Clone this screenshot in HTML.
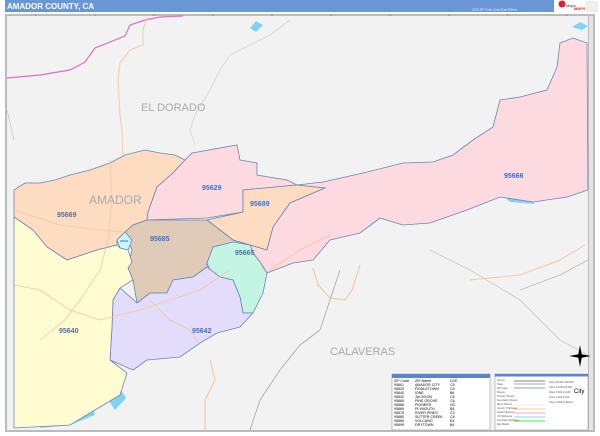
<!DOCTYPE html>
<html><head><meta charset="utf-8"><style>
html,body{margin:0;padding:0;background:#fff;}
body{width:600px;height:436px;overflow:hidden;position:relative;font-family:"Liberation Sans",sans-serif;}
</style></head><body>
<svg width="600" height="436" viewBox="0 0 600 436" xmlns="http://www.w3.org/2000/svg" style="position:absolute;left:0;top:0">
<rect x="0" y="0" width="600" height="436" fill="#fff"/>
<rect x="5" y="0" width="549" height="12" fill="#6a96d6"/>
<text x="7" y="9" font-size="8" font-weight="bold" fill="#fff" font-family="Liberation Sans">AMADOR COUNTY, CA</text>
<text x="472" y="10.5" font-size="3" fill="#fff" font-family="Liberation Sans">2020 ZIP Code Color/Cast Edition</text>
<circle cx="562" cy="4" r="3.5" fill="#d23"/>
<text x="566" y="7" font-size="4" fill="#345" font-family="Liberation Sans">Maps</text>
<text x="574" y="10" font-size="4" fill="#d22" font-weight="bold" font-family="Liberation Sans">MAPS</text>
<rect x="585" y="1" width="13" height="11" fill="#eee"/>
<rect x="5" y="14" width="590" height="418" fill="#bbb"/>
<rect x="7" y="16" width="581" height="414" fill="#f2f2f2"/>
<rect x="589" y="16" width="4" height="414" fill="#e4e4e4"/>
<g stroke="#888" stroke-width="1">
<line x1="36" y1="14" x2="36" y2="16"/><line x1="95" y1="14" x2="95" y2="16"/><line x1="154" y1="14" x2="154" y2="16"/><line x1="213" y1="14" x2="213" y2="16"/><line x1="272" y1="14" x2="272" y2="16"/><line x1="331" y1="14" x2="331" y2="16"/><line x1="390" y1="14" x2="390" y2="16"/><line x1="449" y1="14" x2="449" y2="16"/><line x1="508" y1="14" x2="508" y2="16"/><line x1="567" y1="14" x2="567" y2="16"/>
</g>
<g fill="none" stroke-width="0.9">
<path d="M7,78 L40,75 L70,70 L85,62 L95,48 L125,36 L130,25 L145,20 L160,17 L183,16" stroke="#e46cc4" stroke-width="1.2"/>
<path d="M147,17 L143,30 L143,45 L130,50 L120,63 L118,80 L120,115 L122,130 L123,155" stroke="#f2d2b0" stroke-width="1.2"/>
<path d="M290,20 L270,35 L250,45 L230,55 L220,70 L210,90 L195,115 L190,130 L195,145" stroke="#d8d8d8"/>
<path d="M7,110 L14,140" stroke="#ccc"/>
<path d="M313,268 L318,285 L330,298 L345,300 L352,290 L360,265" stroke="#efcba5" stroke-width="1.2"/>
<path d="M470,280 L520,275 L560,260 L585,245" stroke="#efcba5" stroke-width="1"/>
<path d="M210,360 L215,380 L205,400 L205,430" stroke="#efcba5" stroke-width="1.2"/>
<path d="M340,270 L330,300 L320,330 L300,345 L280,370 L260,400 L250,430" stroke="#aaa"/>
<path d="M520,290 L560,275 L588,260" stroke="#bbb"/>
<path d="M430,250 L470,270 L520,300 L560,340 L588,355" stroke="#ccc"/>
</g>
<g fill="#7fd4f4">
<path d="M250,28 L256,21 L263,25 L256,32 Z"/>
<path d="M572,27 L580,22 L588,26 L582,30 Z"/>
<path d="M476,166 L490,155 L502,150 L500,158 L486,166 Z"/>
<path d="M558,65 L564,50 L570,55 L565,70 Z"/>
<path d="M505,197 L530,200 L535,204 L510,202 Z"/>
<path d="M40,410 L60,400 L75,408 L90,395 L95,415 L70,425 L40,428 Z"/>
<path d="M105,395 L118,385 L126,398 L115,410 Z"/>
</g>
<g stroke="#6b84b8" stroke-width="0.8">
<path fill="#fddcc2" d="M14,190 L25,183 L40,183 L55,180 L70,175 L90,170 L110,163 L125,155 L145,150 L160,153 L175,155 L185,160 L173,173 L157,187 L148,212 L147,220 L133,225 L125,232 L117,240 L117,245 L97,250 L67,260 L47,247 L33,230 L14,217 Z"/>
<path fill="#fdd9e0" d="M185,160 L192,153 L237,145 L240,160 L257,163 L257,175 L287,180 L297,185 L243,190 L243,212 L207,218 L147,220 L148,212 L157,187 L173,173 Z"/>
<path fill="#fddcc2" d="M243,190 L297,185 L325,188 L290,203 L273,227 L267,250 L250,245 L233,240 L207,220 L243,212 Z"/>
<path fill="#fdd9e0" d="M297,185 L323,182 L363,173 L403,163 L433,162 L453,155 L473,140 L493,127 L500,100 L520,97 L547,90 L557,67 L560,43 L573,38 L587,43 L588,190 L567,197 L533,202 L500,197 L467,210 L430,223 L403,225 L380,218 L360,233 L330,240 L313,260 L293,263 L267,273 L260,262 L253,253 L250,245 L267,250 L273,227 L290,203 L325,188 Z"/>
<path fill="#dfcbb8" d="M133,225 L147,220 L207,220 L233,240 L250,245 L233,242 L213,247 L207,263 L207,267 L193,277 L173,280 L167,293 L150,293 L137,303 L133,280 L128,268 L132,250 L125,232 Z"/>
<path fill="#c6f6ff" d="M117,240 L125,232 L132,240 L128,250 L120,248 Z"/>
<path fill="#c4f5e2" d="M213,247 L233,242 L250,245 L253,253 L260,262 L267,273 L263,293 L253,313 L243,313 L240,297 L233,280 L220,277 L210,270 L207,263 Z"/>
<path fill="#e3dcfb" d="M120,288 L137,303 L150,293 L167,293 L173,280 L193,277 L207,267 L220,277 L233,280 L240,297 L243,313 L253,313 L240,327 L217,333 L200,343 L180,357 L147,360 L133,370 L110,360 L112,327 L113,300 Z"/>
<path fill="#fffcd2" d="M14,217 L33,230 L47,247 L67,260 L97,250 L117,245 L120,248 L128,250 L132,262 L128,268 L133,280 L120,288 L113,300 L112,327 L110,360 L127,373 L120,395 L95,410 L70,425 L14,428 Z"/>
</g>
<g fill="none" stroke="#f2c79c" stroke-width="0.8">
<path d="M14,210 L60,225 L100,230 L125,232"/>
<path d="M110,160 L112,200 L108,240 L100,270 L80,300 L65,320 L40,340"/>
<path d="M14,285 L40,290 L70,310 L100,320 L140,310 L170,300 L200,290 L230,270"/>
<path d="M150,300 L170,320 L190,330 L200,345"/>
<path d="M270,270 L300,250 L330,235"/>
</g>
<g font-family="Liberation Sans" fill="#aaa" font-size="11">
<text x="141" y="111">EL DORADO</text>
<text x="89" y="204" font-size="12">AMADOR</text>
<text x="330" y="355">CALAVERAS</text>
</g>
<g font-family="Liberation Sans" fill="#4a6fb8" font-size="7" font-weight="bold">
<text x="504" y="178">95666</text>
<text x="202" y="190">95629</text>
<text x="250" y="206">95689</text>
<text x="57" y="217">95669</text>
<text x="150" y="241">95685</text>
<text x="235" y="255">95665</text>
<text x="192" y="333">95642</text>
<text x="59" y="333">95640</text>
<text x="120" y="242" font-size="3">95699</text>
</g>
<g fill="#000">
<path d="M580,345 L582,356 L580,367 L578,356 Z"/>
<path d="M569,356 L580,354 L591,356 L580,358 Z"/>
</g>
<rect x="392" y="374" width="98" height="56" fill="#fff" stroke="#888" stroke-width="0.5"/>
<rect x="392" y="374" width="98" height="4" fill="#5b84cf"/>
<g font-family="Liberation Sans" font-size="3.6" fill="#000">
<text x="394" y="382">ZIP Code</text><text x="415" y="382">ZIP Name</text><text x="450" y="382">LOC</text>
<text x="394" y="386">95601</text><text x="415" y="386">AMADOR CITY</text><text x="450" y="386">C5</text>
<text x="394" y="390">95629</text><text x="415" y="390">FIDDLETOWN</text><text x="450" y="390">C5</text>
<text x="394" y="394">95640</text><text x="415" y="394">IONE</text><text x="450" y="394">B6</text>
<text x="394" y="398">95642</text><text x="415" y="398">JACKSON</text><text x="450" y="398">C6</text>
<text x="394" y="402">95665</text><text x="415" y="402">PINE GROVE</text><text x="450" y="402">C6</text>
<text x="394" y="406">95666</text><text x="415" y="406">PIONEER</text><text x="450" y="406">H3</text>
<text x="394" y="410">95669</text><text x="415" y="410">PLYMOUTH</text><text x="450" y="410">B4</text>
<text x="394" y="414">95675</text><text x="415" y="414">RIVER PINES</text><text x="450" y="414">C3</text>
<text x="394" y="418">95685</text><text x="415" y="418">SUTTER CREEK</text><text x="450" y="418">C6</text>
<text x="394" y="422">95689</text><text x="415" y="422">VOLCANO</text><text x="450" y="422">E4</text>
<text x="394" y="426">95699</text><text x="415" y="426">DRYTOWN</text><text x="450" y="426">B4</text>
</g>
<rect x="495" y="374" width="93" height="56" fill="#fff" stroke="#888" stroke-width="0.5"/>
<rect x="495" y="374" width="93" height="2.5" fill="#5b84cf"/>
<g stroke-width="1.2">
<line x1="514" y1="381" x2="545" y2="381" stroke="#999"/>
<line x1="514" y1="384" x2="545" y2="384" stroke="#bbb"/>
<line x1="514" y1="388" x2="545" y2="388" stroke="#9bc"/>
<line x1="514" y1="405" x2="545" y2="405" stroke="#eee"/>
<line x1="514" y1="409" x2="545" y2="409" stroke="#fbd6a8"/>
<line x1="514" y1="413" x2="545" y2="413" stroke="#f8b8e0"/>
<line x1="514" y1="417" x2="545" y2="417" stroke="#a8d8f0"/>
<line x1="514" y1="421" x2="545" y2="421" stroke="#6e6"/>
</g>
<g font-family="Liberation Sans" font-size="2.5" fill="#555">
<text x="497" y="381">County</text><text x="497" y="385">State</text><text x="497" y="389">ZIP Code</text>
<text x="497" y="393">Streets</text><text x="497" y="397">Primary Streets</text><text x="497" y="401">Secondary Streets</text>
<text x="497" y="405">Minor Streets</text><text x="497" y="409">Country Highways</text><text x="497" y="413">State Highways</text>
<text x="497" y="417">US Highways</text><text x="497" y="421">Interstate Highways</text><text x="497" y="425">Rail Roads</text>
<text x="549" y="383">Cities 25,000-100,000</text><text x="549" y="388">Cities 10,000-25,000</text><text x="549" y="393">Cities 5,000-10,000</text><text x="549" y="398">Cities 1,000-5,000</text><text x="549" y="403">Cities 0-999 or Below</text>
</g>
<text x="574" y="393" font-size="6" font-family="Liberation Sans" fill="#000">City</text>
</svg>
</body></html>
